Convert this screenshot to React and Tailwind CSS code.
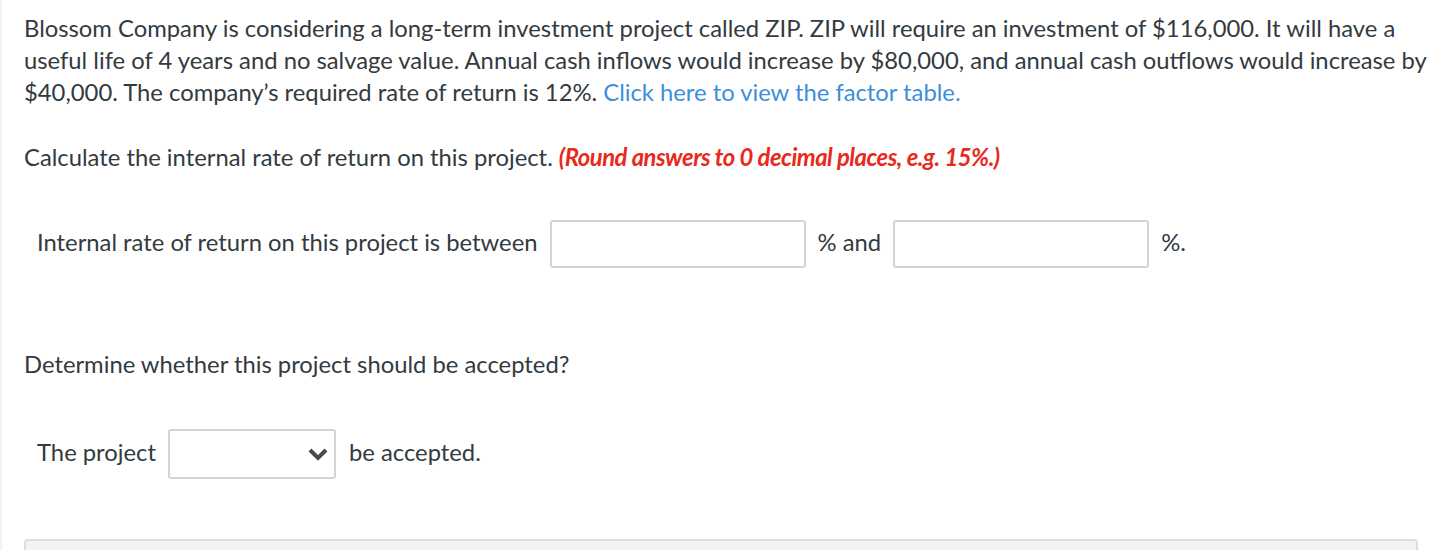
import React, { useState } from 'react';

const App = () => {
  const [low, setLow] = useState('');
  const [high, setHigh] = useState('');
  const [choice, setChoice] = useState('');

  return (
    <div className="h-[550px] bg-white border-l-2 border-[#f4f4f4] text-[#333a40] text-[23.8px] leading-[32px] overflow-hidden" style={{ fontFamily: 'Lato, "Liberation Sans", sans-serif' }}>
      <div className="pl-[22px] pr-[4px] pt-[12px]">
        <p>
          Blossom Company is considering a long-term investment project called ZIP. ZIP will require an investment of $116,000. It will have a
          useful life of 4 years and no salvage value. Annual cash inflows would increase by $80,000, and annual cash outflows would increase by
          $40,000. The company’s required rate of return is 12%.{' '}
          <a href="#" className="text-[#3d8fd9]">Click here to view the factor table.</a>
        </p>

        <p className="mt-[33px]">
          Calculate the internal rate of return on this project.{' '}
          <span className="text-[#e8291c] font-bold italic tracking-[-0.02em]">(Round answers to 0 decimal places, e.g. 15%.)</span>
        </p>

        <div className="mt-[47px] pl-[13px] flex items-center">
          <span className="mb-[4px]">Internal rate of return on this project is between</span>
          <input
            value={low}
            onChange={(e) => setLow(e.target.value)}
            className="ml-[12px] w-[256px] h-[48px] border-2 border-[#d4d4d4] rounded-[3px] outline-none px-2"
          />
          <span className="ml-[12px] mb-[4px]">% and</span>
          <input
            value={high}
            onChange={(e) => setHigh(e.target.value)}
            className="ml-[12px] w-[256px] h-[48px] border-2 border-[#d4d4d4] rounded-[3px] outline-none px-2"
          />
          <span className="ml-[12px] mb-[4px]">%.</span>
        </div>

        <p className="mt-[80px]">Determine whether this project should be accepted?</p>

        <div className="mt-[49px] pl-[13px] flex items-center">
          <span className="mb-[4px]">The project</span>
          <div className="relative ml-[12px]">
            <select
              value={choice}
              onChange={(e) => setChoice(e.target.value)}
              className="appearance-none block w-[168px] h-[50px] border-2 border-[#d4d4d4] rounded-[3px] bg-white outline-none px-2"
            >
              <option value=""></option>
              <option value="should">should</option>
              <option value="should not">should not</option>
            </select>
            <svg className="absolute right-[7px] top-[17px] pointer-events-none" width="22" height="16" viewBox="0 0 22 16">
              <polyline points="3,4 11,12 19,4" fill="none" stroke="#4a4a4a" strokeWidth="4" strokeLinejoin="miter" />
            </svg>
          </div>
          <span className="ml-[13px] mb-[4px]">be accepted.</span>
        </div>

        <div className="mt-[60px] mr-[14px] h-[40px] border-2 border-[#dedede] rounded-t-[4px] bg-[#f3f3f3]"></div>
      </div>
    </div>
  );
};

export default App;
